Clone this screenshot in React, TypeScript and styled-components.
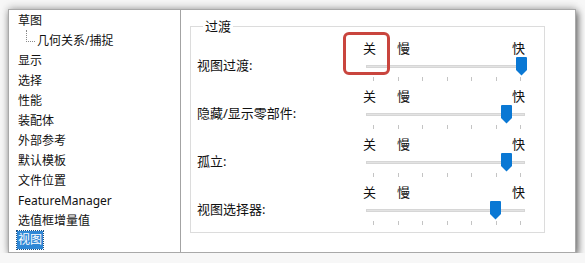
import styled, { createGlobalStyle } from 'styled-components';

const GlobalStyle = createGlobalStyle`
  html, body {
    margin: 0;
    padding: 0;
    background: #f7f7f7;
  }
  body {
    font-family: 'Noto Sans', 'Noto Sans CJK SC', sans-serif;
    color: #111;
  }
`;

type SliderRow = {
  label: string;
  value: number;
};

const navItems = [
  '草图',
  '几何关系/捕捉',
  '显示',
  '选择',
  '性能',
  '装配体',
  '外部参考',
  '默认模板',
  '文件位置',
  'FeatureManager',
  '选值框增量值',
  '视图',
];

const sliders: SliderRow[] = [
  { label: '视图过渡:', value: 1 },
  { label: '隐藏/显示零部件:', value: 0.9 },
  { label: '孤立:', value: 0.9 },
  { label: '视图选择器:', value: 0.83 },
];

const TICKS = 7;
const TICK_START = 10;
const TICK_SPAN = 148;

const Slider = ({ value }: { value: number }) => (
  <SliderBox>
    <SpeedLabels>
      <span>关</span>
      <span className='slow'>慢</span>
      <span className='fast'>快</span>
    </SpeedLabels>
    <Track />
    <Ticks>
      {Array.from({ length: TICKS }).map((_, i) => (
        <Tick key={i} />
      ))}
    </Ticks>
    <Thumb
      width='11'
      height='19'
      viewBox='0 0 11 19'
      style={{ left: TICK_START + value * TICK_SPAN - 5.5 }}
    >
      <path d='M1 0 H10 Q11 0 11 1 V13 L5.5 18.5 L0 13 V1 Q0 0 1 0 Z' fill='#0a78d4' />
    </Thumb>
  </SliderBox>
);

const App = () => {
  return (
    <>
      <GlobalStyle />
      <Window>
        <NavList>
          {navItems.map((item, i) => (
            <NavItem key={item} $child={i === 1}>
              {i === 1 && <TreeLine />}
              {i === navItems.length - 1 ? <Selected>{item}</Selected> : item}
            </NavItem>
          ))}
        </NavList>
        <RightPane>
          <GroupBox>
            <Legend>过渡</Legend>
            {sliders.map((s) => (
              <Row key={s.label}>
                <RowLabel>{s.label}</RowLabel>
                <Slider value={s.value} />
              </Row>
            ))}
          </GroupBox>
          <Highlight />
        </RightPane>
      </Window>
    </>
  );
};

export default App;

const Window = styled.div`
  margin: 9px 0 0 8px;
  width: 568px;
  height: 244px;
  box-sizing: border-box;
  background: #fff;
  border: 1px solid #a9a9a9;
  box-shadow: 2px 3px 7px rgba(0, 0, 0, 0.55), 0 -2px 8px rgba(0, 0, 0, 0.18);
  display: flex;
`;

const NavList = styled.div`
  width: 171px;
  flex-shrink: 0;
  border-right: 1px solid #a3a3a3;
  padding-top: 0;
  font-size: 12px;
`;

const NavItem = styled.div<{ $child?: boolean }>`
  height: 20px;
  display: flex;
  align-items: center;
  padding-left: 9px;
  white-space: nowrap;
  position: relative;
`;

const TreeLine = styled.span`
  align-self: flex-start;
  width: 8px;
  height: 11px;
  margin-left: 8px;
  margin-right: 2px;
  border-left: 1px dotted #8a8a8a;
  border-bottom: 1px dotted #8a8a8a;
`;

const Selected = styled.span`
  background: #2f87d5;
  color: #fff;
  padding: 0 1px;
  margin-left: -1px;
  line-height: 18px;
  outline: 1px dotted #1b4f80;
`;

const RightPane = styled.div`
  flex: 1;
  position: relative;
  padding: 16px 0 0 9px;
`;

const GroupBox = styled.div`
  width: 355px;
  height: 207px;
  box-sizing: border-box;
  border: 1px solid #dcdcdc;
  padding: 0 0 0 6px;
  font-size: 13px;
`;

const Legend = styled.div`
  width: fit-content;
  margin: -9px 0 6px 6px;
  padding: 0 2px;
  line-height: 16px;
  background: #fff;
`;

const Row = styled.div`
  display: grid;
  grid-template-columns: 166px 163px;
  height: 48px;
`;

const RowLabel = styled.div`
  padding-top: 17px;
  line-height: 16px;
  white-space: nowrap;
`;

const SliderBox = styled.div`
  position: relative;
`;

const SpeedLabels = styled.div`
  display: flex;
  height: 16px;
  line-height: 16px;
  .slow {
    margin-left: 21px;
  }
  .fast {
    margin-left: auto;
    margin-right: 1px;
  }
`;

const Track = styled.div`
  margin: 9px 0 0 3px;
  width: 159px;
  height: 3px;
  box-sizing: border-box;
  background: #e3e3e3;
  border: 1px solid #d6d6d6;
`;

const Ticks = styled.div`
  display: flex;
  justify-content: space-between;
  margin-top: 9px;
  padding: 0 5px 0 10px;
`;

const Tick = styled.span`
  width: 1px;
  height: 4px;
  background: #c4c4c4;
`;

const Thumb = styled.svg`
  position: absolute;
  top: 17px;
`;

const Highlight = styled.div`
  position: absolute;
  left: 162px;
  top: 22px;
  width: 47px;
  height: 43px;
  box-sizing: border-box;
  border: 3px solid #c9453e;
  border-radius: 6px;
`;
